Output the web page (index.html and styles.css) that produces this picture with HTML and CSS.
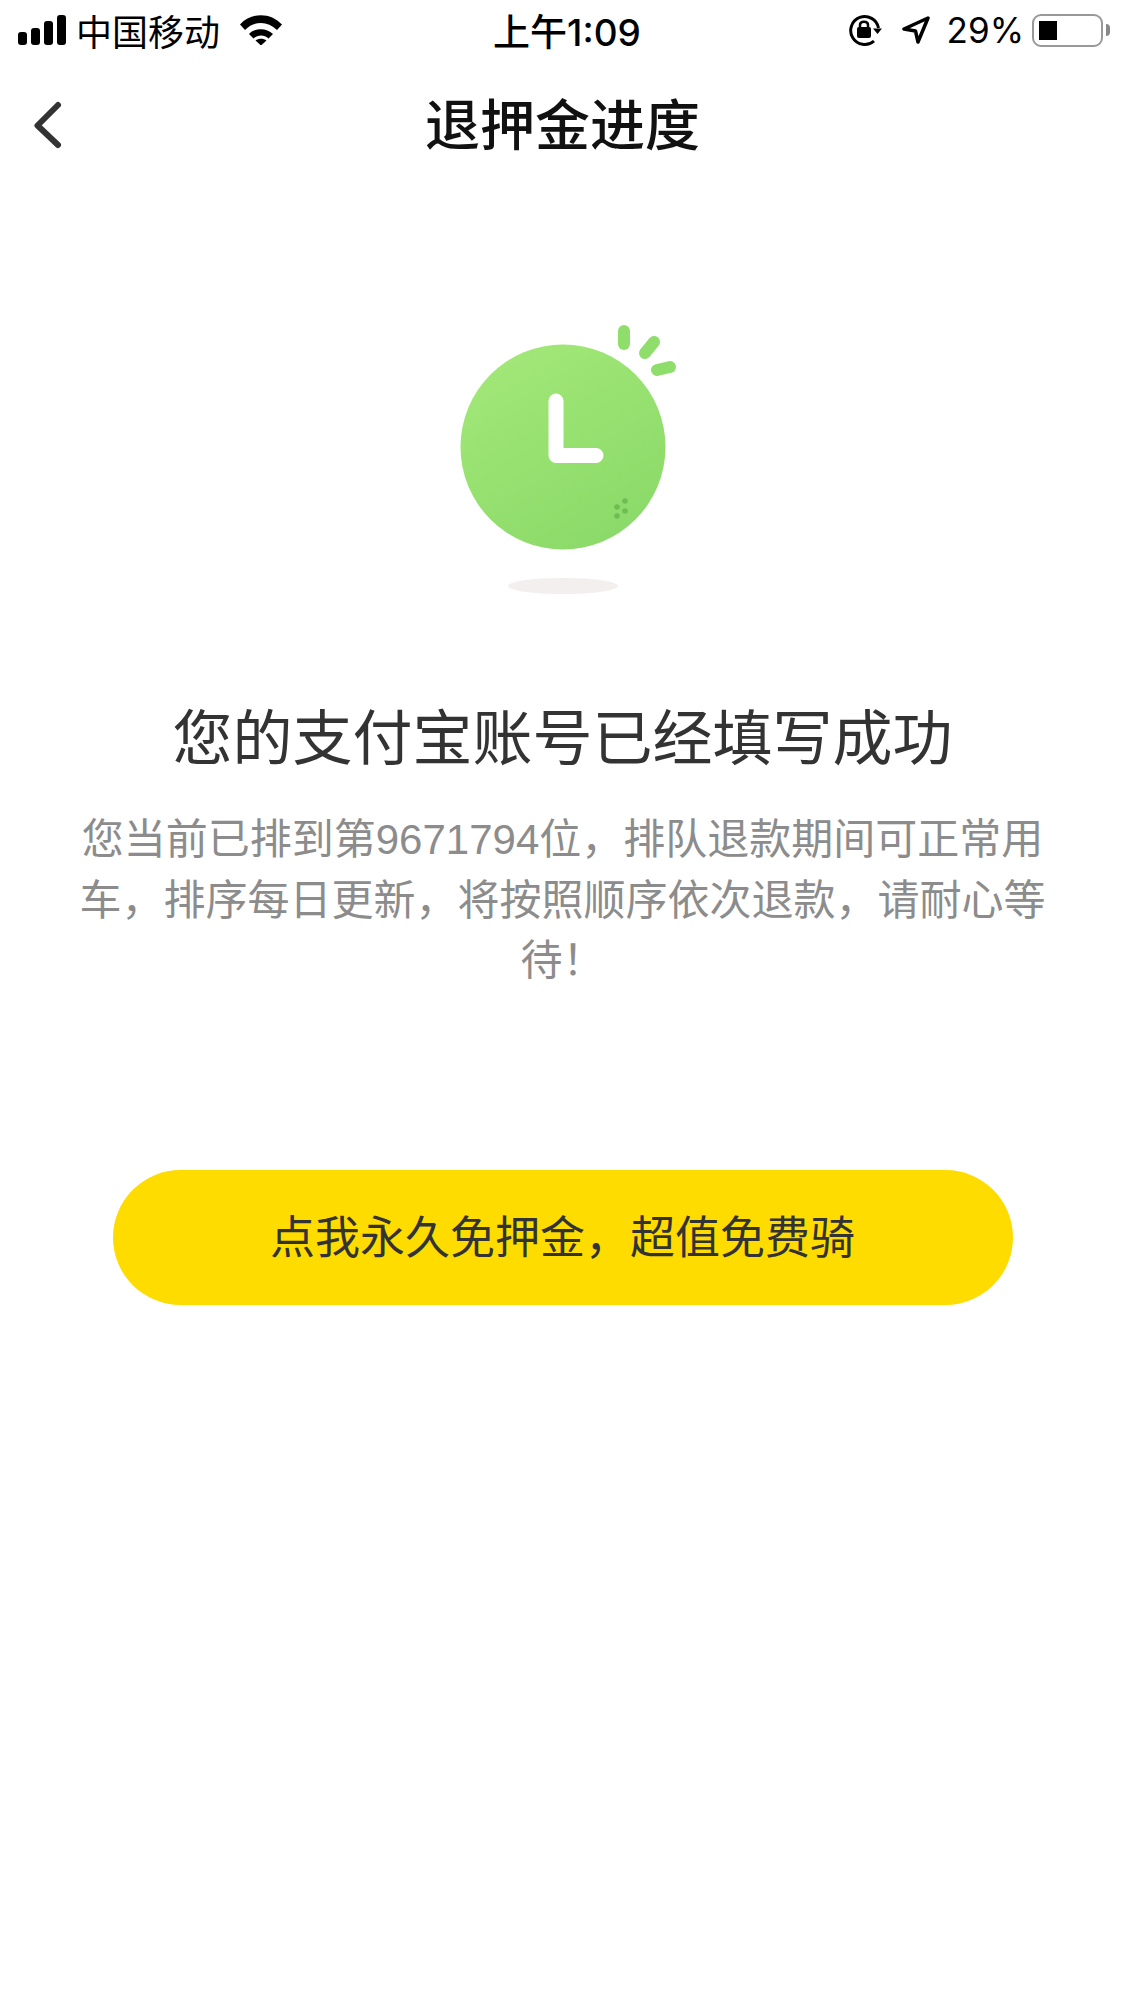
FILE: index.html
```html
<!DOCTYPE html>
<html lang="zh-CN">
<head>
  <meta charset="utf-8">
  <title>退押金进度</title>
  <link rel="stylesheet" href="styles.css">
</head>
<body>
  <div class="status-bar">
    <div class="status-left">
      <svg class="signal" width="48" height="30" viewBox="0 0 48 30">
        <rect x="0" y="17" width="9" height="13" rx="3"/>
        <rect x="13" y="13" width="9" height="17" rx="3"/>
        <rect x="26" y="6" width="9" height="24" rx="3"/>
        <rect x="39" y="0" width="9" height="30" rx="3"/>
      </svg>
      <span class="carrier">中国移动</span>
      <svg class="wifi" width="42" height="30" viewBox="0 0 42 30">
        <path d="M0 9.5C11.500 -3 30.500 -3 42 9.500L37 15C27.500 5.500 14.500 5.500 5 15Z"/>
        <path d="M9 19C15.500 12.500 26.500 12.500 33 19L28.500 23.500C24.500 19.500 17.500 19.500 13.500 23.500Z"/>
        <path d="M15.500 25.500C18.500 23 23.500 23 26.500 25.500L21 30.500Z"/>
      </svg>
    </div>
    <div class="status-time">上午1:09</div>
    <div class="status-right">
      <svg class="lock" width="33" height="34" viewBox="0 0 33 34">
        <path class="lock-ring" d="M29.500 15A14 14 0 1 0 25 28"/>
        <path d="M24 15.500L33 15.500L28.500 21Z"/>
        <rect x="8" y="14" width="14" height="11" rx="2"/>
        <path class="lock-shackle" d="M11 15V12C11 7.500 19 7.500 19 12V15"/>
      </svg>
      <svg class="arrow" width="28" height="28" viewBox="0 0 28 28">
        <path d="M26 2L2 13L13.500 15L16 26Z"/>
      </svg>
      <span class="battery-pct">29%</span>
      <div class="battery"><div class="battery-fill"></div></div>
      <div class="battery-nub"></div>
    </div>
  </div>

  <div class="nav-bar">
    <svg class="back" width="32" height="54" viewBox="0 0 32 54">
      <path d="M25 7L4.500 27.500L25 47"/>
    </svg>
    <h1 class="nav-title">退押金进度</h1>
  </div>

  <div class="content">
    <svg class="clock" width="320" height="280" viewBox="0 0 320 280">
      <defs>
        <linearGradient id="clockFill" x1="0.2" y1="0" x2="0.8" y2="1">
          <stop offset="0" stop-color="#a2e878"/>
          <stop offset="1" stop-color="#8ad968"/>
        </linearGradient>
      </defs>
      <circle cx="163" cy="127" r="102.500" fill="url(#clockFill)"/>
      <path class="hand" d="M156 81V135.500H196"/>
      <path class="ray" d="M224 11V24"/>
      <path class="ray" d="M245 33L254 22"/>
      <path class="ray" d="M257 50L270 47"/>
      <circle class="dot" cx="217" cy="187" r="2.800"/>
      <circle class="dot" cx="225" cy="181" r="2.800"/>
      <circle class="dot" cx="225" cy="191" r="2.800"/>
      <circle class="dot" cx="217" cy="196" r="2.800"/>
      <ellipse cx="163" cy="266" rx="55" ry="8" fill="#f3efee"/>
    </svg>

    <h2 class="headline">您的支付宝账号已经填写成功</h2>
    <p class="desc">您当前已排到第9671794位，排队退款期间可正常用车，排序每日更新，将按照顺序依次退款，请耐心等待！</p>
    <button class="action" type="button">点我永久免押金，超值免费骑</button>
  </div>
</body>
</html>
```

FILE: styles.css
```css
body {
  margin: 0;
  background: #fff;
  color: #333;
  font-family: "Liberation Sans", "Noto Sans CJK SC", sans-serif;
}

.status-bar {
  display: grid;
  grid-template-columns: 1fr auto 1fr;
  align-items: center;
  height: 60px;
  padding: 0 15px 0 18px;
  color: #000;
}

.status-left,
.status-right {
  display: flex;
  align-items: center;
}

.status-right {
  justify-content: flex-end;
}

.carrier {
  margin-left: 10px;
  font-size: 36px;
}

.wifi {
  margin-left: 20px;
}

.status-time {
  margin-left: 6px;
  font-family: "Inter", "Noto Sans CJK SC", sans-serif;
  font-size: 37px;
  font-weight: 500;
}

.lock-ring {
  fill: none;
  stroke: #000;
  stroke-width: 3;
}

.lock-shackle {
  fill: none;
  stroke: #000;
  stroke-width: 2.500;
}

.arrow {
  margin-left: 20px;
}

.arrow path {
  fill: none;
  stroke: #000;
  stroke-width: 3.500;
  stroke-linejoin: round;
}

.battery-pct {
  margin-left: 17px;
  font-family: "Inter", sans-serif;
  font-size: 35px;
}

.battery {
  box-sizing: border-box;
  width: 71px;
  height: 33px;
  margin-left: 8px;
  padding: 5px;
  border: 2px solid #999;
  border-radius: 9px;
}

.battery-fill {
  width: 18px;
  height: 100%;
  background: #000;
}

.battery-nub {
  width: 4px;
  height: 12px;
  margin-left: 3px;
  background: #888;
  border-radius: 0 4px 4px 0;
}

.nav-bar {
  position: relative;
  display: flex;
  justify-content: center;
  align-items: center;
  height: 130px;
}

.back {
  position: absolute;
  left: 33px;
  top: 38px;
}

.back path {
  fill: none;
  stroke: #333;
  stroke-width: 6;
  stroke-linecap: round;
  stroke-linejoin: round;
}

.nav-title {
  margin: 0 0 8px;
  color: #111;
  font-size: 55px;
  font-weight: 500;
}

.content {
  display: flex;
  flex-direction: column;
  align-items: center;
  padding-top: 130px;
}

.clock {
  display: block;
  margin-right: 5px;
}

.hand {
  fill: none;
  stroke: #fff;
  stroke-width: 15;
  stroke-linecap: round;
  stroke-linejoin: round;
}

.ray {
  fill: none;
  stroke: #8fdd6b;
  stroke-width: 12;
  stroke-linecap: round;
}

.dot {
  fill: #6dbd55;
}

.headline {
  margin: 100px 0 0;
  color: #333;
  font-size: 60px;
  font-weight: 400;
  line-height: 80px;
}

.desc {
  width: 968px;
  margin: 30px 0 0;
  color: #8c8c8c;
  font-size: 42px;
  line-height: 60.5px;
  text-align: center;
}

.action {
  width: 900px;
  height: 135px;
  margin-top: 178px;
  padding: 0 0 6px;
  border: none;
  border-radius: 68px;
  background: #ffdc00;
  color: #333;
  font-family: inherit;
  font-size: 45px;
}
```
